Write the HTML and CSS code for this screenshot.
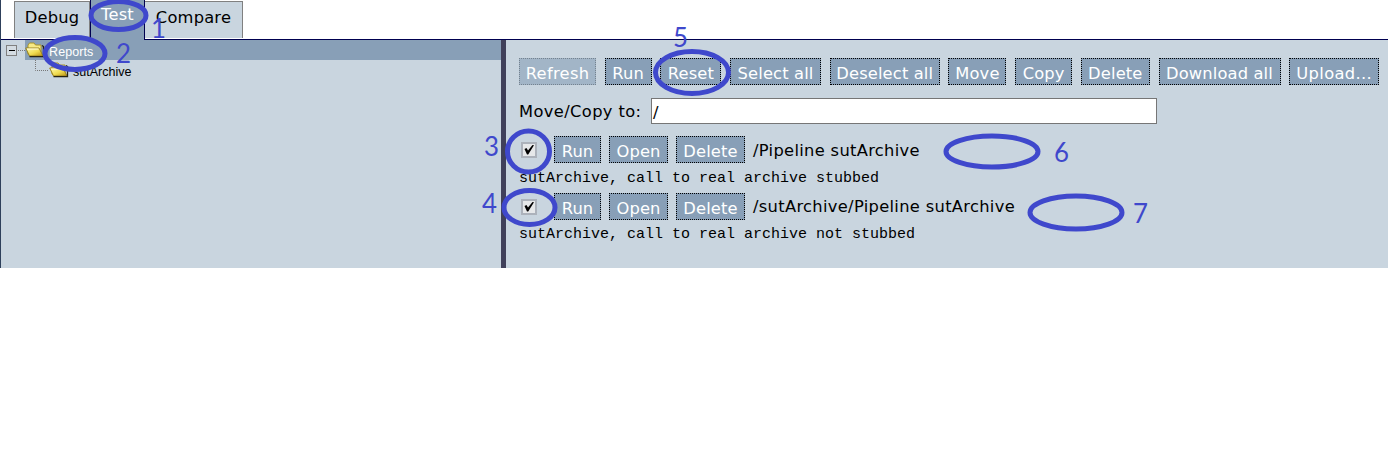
FILE: index.html
```
<!DOCTYPE html>
<html lang="en">
<head>
<meta charset="utf-8">
<title>Test tool</title>
<link rel="stylesheet" href="styles.css">
</head>
<body>
<svg class="defs" width="0" height="0">
  <defs>
    <linearGradient id="gold" x1="0" y1="0" x2="1" y2="1"><stop offset="0" stop-color="#fffbb0"/><stop offset=".55" stop-color="#f0dc50"/><stop offset="1" stop-color="#b98f12"/></linearGradient>
    <symbol id="folder" viewBox="0 0 20 16">
      <path d="M3 12V3L4.500 1H9l1.500 2H16v10H4z" fill="#f7ea85" stroke="#aa9429"/>
      <path d="M.7 6H14l4 8H4.500z" fill="url(#gold)" stroke="#9b8420"/>
      <path d="M4.500 14.700H18.500V4.500L17 3.500" fill="none" stroke="#282410" stroke-width="1.300"/>
      <path d="M2 7h11.500" stroke="#fffde0"/>
    </symbol>
  </defs>
</svg>
<main class="app">
  <nav class="tabs">
    <a class="tab debug">Debug</a><a class="tab active">Test</a><a class="tab compare">Compare</a>
  </nav>
  <div class="panes">
    <aside class="tree">
      <div class="node root">
        <svg class="toggle" width="25" height="20"><rect x="5.500" y="5.500" width="10" height="10" fill="#d4dce2" stroke="#808080"/><path d="M8 10.500h6" stroke="#000"/><path d="M17 10.500h8" stroke="#777" stroke-dasharray="1 1"/></svg>
        <span class="selected"><svg class="folder"><use href="#folder"/></svg><span>Reports</span></span>
      </div>
      <div class="node child">
        <svg class="branch" width="14" height="20"><path d="M.5 0v10.500H14" fill="none" stroke="#777" stroke-dasharray="1 1"/></svg>
        <svg class="folder"><use href="#folder"/></svg><span>sutArchive</span>
      </div>
    </aside>
    <section class="content">
      <div class="toolbar">
        <span class="btn refresh">Refresh</span><span class="btn run">Run</span><span class="btn reset">Reset</span><span class="btn select">Select all</span><span class="btn deselect">Deselect all</span><span class="btn move">Move</span><span class="btn copy">Copy</span><span class="btn delete">Delete</span><span class="btn download">Download all</span><span class="btn upload">Upload...</span>
      </div>
      <div class="destination"><span class="label">Move/Copy to:</span><span class="input">/</span></div>
      <div class="report">
        <svg class="check" width="16" height="16"><rect x="1" y="1" width="14" height="14" fill="#e6e8ea" stroke="#acb2bb" stroke-width="2"/><path d="M3.500 7l2-1 1.500 2.500L11.500 3l1.500.2L7.200 12.500H6z" fill="#000"/></svg>
        <span class="btn run">Run</span><span class="btn open">Open</span><span class="btn delete">Delete</span><span class="path">/Pipeline sutArchive</span>
      </div>
      <div class="desc">sutArchive, call to real archive stubbed</div>
      <div class="report">
        <svg class="check" width="16" height="16"><rect x="1" y="1" width="14" height="14" fill="#e6e8ea" stroke="#acb2bb" stroke-width="2"/><path d="M3.500 7l2-1 1.500 2.500L11.500 3l1.500.2L7.200 12.500H6z" fill="#000"/></svg>
        <span class="btn run">Run</span><span class="btn open">Open</span><span class="btn delete">Delete</span><span class="path">/sutArchive/Pipeline sutArchive</span>
      </div>
      <div class="desc">sutArchive, call to real archive not stubbed</div>
    </section>
  </div>
</main>
<svg class="marks" width="1388" height="466">
  <g class="rings">
    <ellipse cx="118.500" cy="15.500" rx="27.500" ry="14"/>
    <ellipse cx="75" cy="53.500" rx="30" ry="16"/>
    <ellipse cx="692" cy="72.500" rx="36.500" ry="21"/>
    <ellipse cx="528.500" cy="151.500" rx="21" ry="20.500"/>
    <ellipse cx="529.500" cy="207.500" rx="25.500" ry="17"/>
    <ellipse cx="992" cy="151.500" rx="46" ry="15.500"/>
    <ellipse cx="1076" cy="212.500" rx="46" ry="16.500"/>
  </g>
  <g class="numbers">
    <text x="151" y="38" textLength="15" lengthAdjust="spacingAndGlyphs">1</text>
    <text x="116" y="63" textLength="15" lengthAdjust="spacingAndGlyphs">2</text>
    <text x="673" y="47" textLength="15" lengthAdjust="spacingAndGlyphs">5</text>
    <text x="484" y="156" textLength="15" lengthAdjust="spacingAndGlyphs">3</text>
    <text x="482" y="213" textLength="15" lengthAdjust="spacingAndGlyphs">4</text>
    <text x="1054" y="162" textLength="15" lengthAdjust="spacingAndGlyphs">6</text>
    <text x="1133" y="223" textLength="15" lengthAdjust="spacingAndGlyphs">7</text>
  </g>
</svg>
</body>
</html>
```
FILE: styles.css
```
* { box-sizing: border-box; }
body { margin: 0; background: #fff; color: #000; font: 16.300px/25px "DejaVu Sans", Verdana, sans-serif; overflow: hidden; }
.defs { position: absolute; }
.app { height: 268px; border-left: 1px solid #2e405b; display: flex; flex-direction: column; }
.tabs { height: 40px; display: flex; padding-left: 13px; background: linear-gradient(#000050, #000050) bottom / 100% 1px no-repeat; }
.tab { display: block; height: 37px; margin-top: 1px; border: 1px solid #808080; border-bottom: 0; background: #c9d5df; text-align: center; line-height: 31px; letter-spacing: .2px; white-space: nowrap; }
.debug { width: 76px; }
.compare { width: 98px; border-left: 0; }
.tab.active { width: 55px; height: 40px; margin: 0; border: solid #000050; border-width: 0 1px; background: #889fb7; color: #fff; line-height: 29px; }
.panes { flex: 1; display: flex; background: #c9d5df; }
.tree { width: 500px; font: 12.500px/20px "Liberation Sans", Arial, sans-serif; }
.node { height: 20px; display: flex; align-items: center; white-space: nowrap; }
.selected { flex: 1; height: 20px; display: flex; align-items: center; background: #889fb7; color: #fff; padding-top: 3px; letter-spacing: .1px; }
.toggle { margin-right: -1px; }
.folder { width: 20px; height: 16px; margin-right: 4px; flex: none; }
.selected .folder { margin-top: -4px; }
.child { padding-left: 34px; }
.child > span { padding-top: 3px; }
.content { flex: 1; border-left: 5px solid #40405a; padding: 18px 0 0 13px; }
.toolbar { display: flex; gap: 8.700px; height: 27px; }
.btn { height: 27px; border: 1px dotted #000; background: #889fb7; color: #fff; text-align: center; line-height: 29px; letter-spacing: .15px; white-space: nowrap; flex: none; }
.refresh { width: 77px; background: #a2b5c7; border-color: #75828e; letter-spacing: .3px; }
.run { width: 47px; }
.reset { width: 61px; }
.select { width: 91px; }
.deselect { width: 110px; }
.move { width: 58px; }
.copy { width: 57px; }
.delete { width: 69px; }
.download { width: 122px; }
.upload { width: 90px; letter-spacing: .35px; }
.open { width: 59px; }
.destination { display: flex; margin-top: 13px; height: 26px; line-height: 28px; }
.label { width: 132px; letter-spacing: .38px; white-space: nowrap; }
.input { width: 506px; border: 1px solid #767676; background: #fff; padding-left: 1px; line-height: 27px; }
.report { display: flex; align-items: center; gap: 8px; height: 27px; margin-top: 12px; padding-left: 2px; }
.check { margin: 0 9px 0 0; }
.path { line-height: 28px; padding-top: 3px; letter-spacing: .32px; white-space: nowrap; }
.desc { height: 17px; margin-top: 7px; font: 15px/17px "Liberation Mono", "Courier New", monospace; white-space: pre; }
.desc + .report { margin-top: 6px; }
.desc + .report .path { padding-top: 1px; }
.desc + .report + .desc { margin-top: 6px; }
.marks { position: absolute; left: 0; top: 0; pointer-events: none; }
.rings { fill: none; stroke: #3f48cc; stroke-width: 5px; }
.numbers { fill: #3f48cc; font: 26px Lato, sans-serif; }
```
